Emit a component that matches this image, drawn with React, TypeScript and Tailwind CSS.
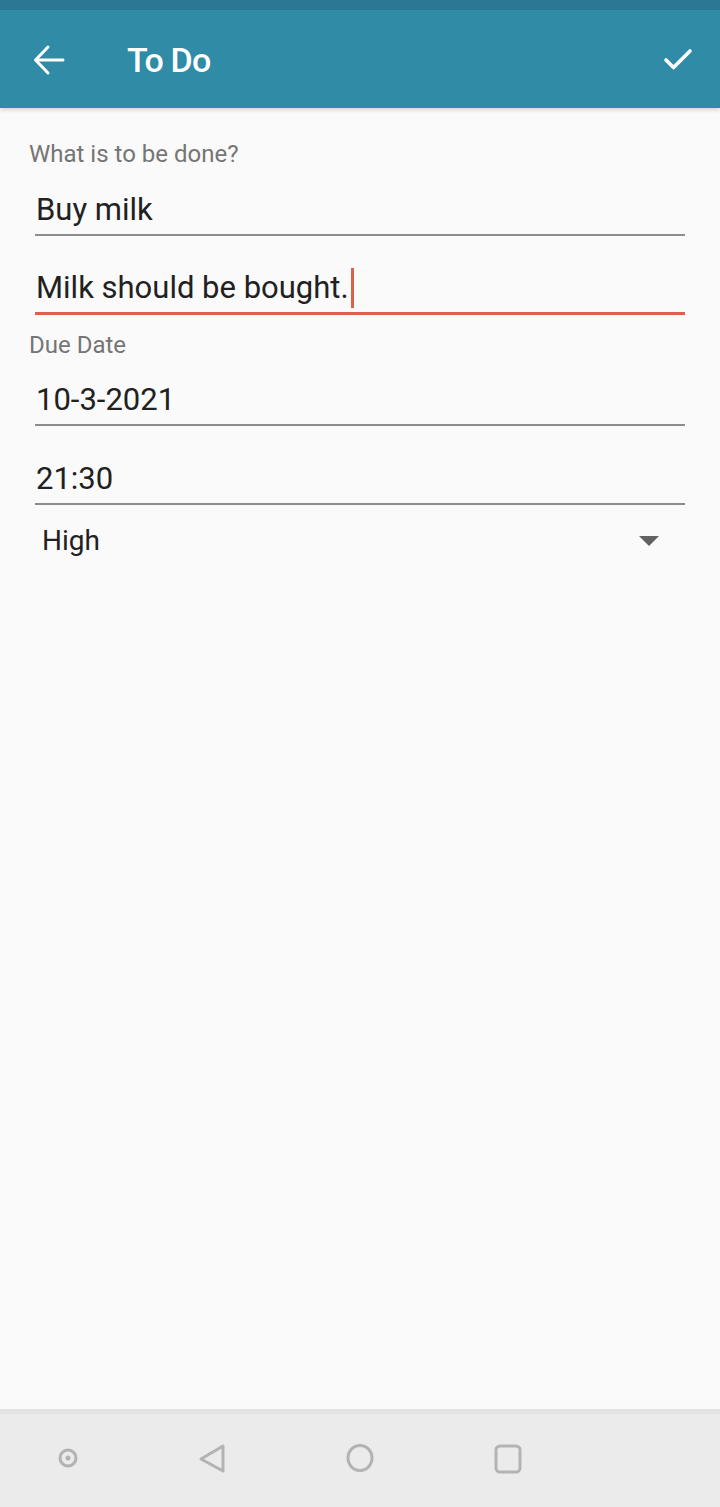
import { Check } from 'lucide-react';

const font = { fontFamily: 'Roboto, "Noto Sans", sans-serif' };

const Field = ({ value, active }: { value: string; active?: boolean }) => (
  <div
    className={`mx-[35px] h-[79px] flex items-end ${
      active ? 'border-b-[3px] border-[#d9634a]' : 'border-b-2 border-[#8c8c8c]'
    }`}
  >
    <div className="pl-px pb-[2px] text-[31px] leading-[44px] text-[#212121] flex items-center">
      {value}
      {active && <span className="ml-[2px] inline-block w-[3px] h-[40px] bg-[#d9634a]" />}
    </div>
  </div>
);

export default function App() {
  return (
    <div className="w-[720px] h-[1507px] flex flex-col bg-[#fafafa]" style={font}>
      <div className="h-[10px] bg-[#2a7893]" />
      <header className="h-[98px] bg-[#2f8ba6] flex items-center text-white shadow-[0_2px_4px_rgba(0,0,0,0.15)]">
        <svg width="32" height="32" viewBox="0 0 32 32" className="ml-[33px] mt-[2px]" fill="none" stroke="white" strokeWidth="3" strokeLinecap="round" strokeLinejoin="round">
          <path d="M30 16 H3 M15 3 L2.5 16 L15 29" />
        </svg>
        <h1 className="ml-[62px] mt-[3px] text-[34px] font-medium tracking-tight">To Do</h1>
        <Check className="ml-auto mr-[24px] mt-[2px] w-[36px] h-[36px]" strokeWidth={2.4} />
      </header>

      <main className="flex-1">
        <div className="pt-[32px] pl-[29px] text-[24px] leading-[28px] text-[#757575]">
          What is to be done?
        </div>
        <div className="-mt-[11px]">
          <Field value="Buy milk" />
          <Field value="Milk should be bought." active />
        </div>
        <div className="pt-[16px] pl-[29px] text-[24px] leading-[28px] text-[#757575]">
          Due Date
        </div>
        <div className="-mt-[12px]">
          <Field value="10-3-2021" />
          <Field value="21:30" />
        </div>
        <div className="mx-[42px] mt-[16px] flex items-center justify-between">
          <span className="text-[28px] leading-[40px] text-[#212121]">High</span>
          <svg width="20" height="10" viewBox="0 0 20 10" className="mr-[19px]">
            <path d="M0 0 L20 0 L10 10 Z" fill="#616161" />
          </svg>
        </div>
      </main>

      <nav className="h-[98px] bg-[#ebebeb] border-t-[5px] border-[#e3e3e3] flex items-center">
        <svg width="720" height="93" viewBox="0 0 720 93" fill="none" stroke="#b3b3b3" strokeWidth="3">
          <circle cx="68" cy="44" r="8" />
          <circle cx="68" cy="44" r="2.5" fill="#b3b3b3" stroke="none" />
          <path d="M223 32 L223 57 L201 45 Z" strokeLinejoin="round" />
          <ellipse cx="360" cy="44" rx="12" ry="12.5" />
          <rect x="496" y="32" width="24" height="26" rx="4" />
        </svg>
      </nav>
    </div>
  );
}
